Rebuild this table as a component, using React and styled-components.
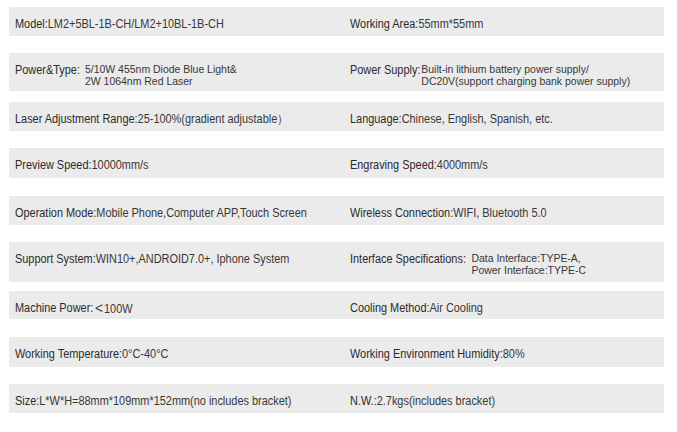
import styled, { createGlobalStyle } from "styled-components"

const Global = createGlobalStyle`
  body {
    margin: 0;
    background: #ffffff;
    font-family: "Liberation Sans", Arial, sans-serif;
    color: #333333;
  }
`

const Sheet = styled.div`
  width: 655px;
  margin-left: 9px;
  padding-top: 7px;
  display: flex;
  flex-direction: column;
`

const Row = styled.div`
  display: grid;
  grid-template-columns: 335px 1fr;
  height: ${(p) => p.$h}px;
  margin-top: ${(p) => p.$gap}px;
  padding: 10px 6px 0;
  box-sizing: border-box;
  background: #ebebeb;
  &:first-child {
    margin-top: 0;
  }
`

/* the source uses a condensed face; squeeze Liberation Sans to match */
const Cell = styled.div`
  display: flex;
  align-items: flex-start;
  font-size: 12px;
  line-height: 14px;
  white-space: nowrap;
  transform: scaleX(0.91);
  transform-origin: left top;
`

const Label = styled.span`
  color: #2a2a2a;
  margin-right: ${(p) => p.$space || 0}px;
`

const Value = styled.span`
  color: #383838;
  font-size: ${(p) => (p.$small ? 11.5 : 12)}px;
  line-height: ${(p) => (p.$small ? 12 : 14)}px;
  display: flex;
  flex-direction: column;
`

const Lt = styled.span`
  font-size: 15px;
  line-height: 14px;
  margin: 0 1px 0 2px;
`

const rows = [
  {
    h: 29, gap: 0,
    left: ["Model:", "LM2+5BL-1B-CH/LM2+10BL-1B-CH"],
    right: ["Working Area:", "55mm*55mm"],
  },
  {
    h: 38, gap: 17,
    left: ["Power&Type:", ["5/10W 455nm Diode Blue Light&", "2W 1064nm Red Laser"], 5.5],
    right: ["Power Supply:", ["Built-in lithium battery power supply/", "DC20V(support charging bank power supply)"], 1],
  },
  {
    h: 29, gap: 11,
    left: ["Laser Adjustment Range:", "25-100%(gradient adjustable）"],
    right: ["Language:", "Chinese, English, Spanish, etc."],
  },
  {
    h: 30, gap: 17,
    left: ["Preview Speed:", "10000mm/s"],
    right: ["Engraving Speed:", "4000mm/s"],
  },
  {
    h: 29, gap: 18,
    left: ["Operation Mode:", "Mobile Phone,Computer APP,Touch Screen"],
    right: ["Wireless Connection:", "WIFI, Bluetooth 5.0"],
  },
  {
    h: 40, gap: 17,
    left: ["Support System:", "WIN10+,ANDROID7.0+, Iphone System"],
    right: ["Interface Specifications:", ["Data Interface:TYPE-A,", "Power Interface:TYPE-C"], 6],
  },
  {
    h: 28, gap: 9,
    left: ["Machine Power:", <><Lt>&lt;</Lt>100W</>],
    right: ["Cooling Method:", "Air Cooling"],
  },
  {
    h: 30, gap: 18,
    left: ["Working Temperature:", "0°C-40°C"],
    right: ["Working Environment Humidity:", "80%"],
  },
  {
    h: 29, gap: 17,
    left: ["Size:", "L*W*H=88mm*109mm*152mm(no includes bracket)"],
    right: ["N.W.:", "2.7kgs(includes bracket)"],
  },
]

function Spec({ item }) {
  const [label, value, space] = item
  const multi = Array.isArray(value)
  return (
    <Cell>
      <Label $space={space}>{label}</Label>
      <Value $small={multi}>
        {multi ? value.map((line) => <span key={line}>{line}</span>) : <span>{value}</span>}
      </Value>
    </Cell>
  )
}

export default function App() {
  return (
    <>
      <Global />
      <Sheet>
        {rows.map((r, i) => (
          <Row key={i} $h={r.h} $gap={r.gap}>
            <Spec item={r.left} />
            <Spec item={r.right} />
          </Row>
        ))}
      </Sheet>
    </>
  )
}
